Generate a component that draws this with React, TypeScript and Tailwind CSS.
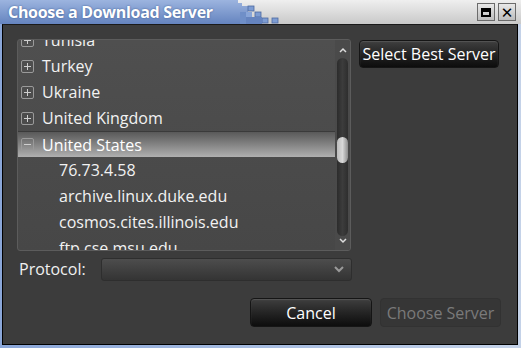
import React from "react";

const font = { fontFamily: '"Open Sans", "DejaVu Sans", sans-serif' };

const Expander = ({ open }: { open?: boolean }) => (
  <svg width="13" height="13" viewBox="0 0 13 13" className="shrink-0">
    <rect x="0.5" y="0.5" width="12" height="12" rx="1.5" fill="none" stroke="#9a9a9a" />
    <line x1="3" y1="6.5" x2="10" y2="6.5" stroke="#cfcfcf" />
    {!open && <line x1="6.5" y1="3" x2="6.5" y2="10" stroke="#cfcfcf" />}
  </svg>
);

const TitleDecor = () => (
  <svg width="60" height="24" viewBox="0 0 60 24" className="absolute left-[232px] top-0">
    <defs>
      <linearGradient id="blu" x1="0" y1="0" x2="0" y2="1">
        <stop offset="0" stopColor="#9cb4df" />
        <stop offset="1" stopColor="#6584bf" />
      </linearGradient>
    </defs>
    <polygon points="0,0 6,0 6,3 10,3 10,6 16,6 16,12 8,12 8,24 0,24" fill="url(#blu)" />
    <rect x="16" y="6" width="6" height="5" fill="#7d9cd2" stroke="#4d6aa0" strokeWidth="0.8" />
    <rect x="23" y="12" width="6" height="5" fill="#7d9cd2" stroke="#4d6aa0" strokeWidth="0.8" />
    <rect x="14" y="12" width="6" height="5" fill="#88a5d8" />
    <rect x="30" y="18" width="6" height="5" fill="#7d9cd2" stroke="#4d6aa0" strokeWidth="0.8" />
    <rect x="40" y="18" width="6" height="5" fill="#7d9cd2" stroke="#4d6aa0" strokeWidth="0.8" />
    <rect x="8" y="12" width="6" height="12" fill="#6f8fc8" />
    <rect x="14" y="17" width="16" height="7" fill="#6584bf" />
  </svg>
);

const rows: { label: string; kind: "group" | "open" | "child" }[] = [
  { label: "Tunisia", kind: "group" },
  { label: "Turkey", kind: "group" },
  { label: "Ukraine", kind: "group" },
  { label: "United Kingdom", kind: "group" },
  { label: "United States", kind: "open" },
  { label: "76.73.4.58", kind: "child" },
  { label: "archive.linux.duke.edu", kind: "child" },
  { label: "cosmos.cites.illinois.edu", kind: "child" },
  { label: "ftp.cse.msu.edu", kind: "child" },
];

export default function App() {
  return (
    <div
      className="w-[521px] h-[348px] bg-[#dcdcdc] flex flex-col overflow-hidden"
      style={font}
    >
      {/* title bar */}
      <div className="relative h-[24px] shrink-0 bg-gradient-to-b from-[#efefef] to-[#c9c9c9] flex items-center">
        <div className="absolute left-0 top-0 h-full w-[234px] bg-gradient-to-b from-[#9cb4df] to-[#6584bf]" />
        <TitleDecor />
        <span className="relative pl-[8px] text-[16px] font-bold text-white tracking-[-0.3px] [text-shadow:0_0_2px_#3b5a90]">
          Choose a Download Server
        </span>
        <div className="ml-auto mr-[5px] relative flex gap-[3px]">
          <div className="w-[18px] h-[18px] border border-[#6b6b6b] bg-gradient-to-b from-[#e8e8e8] to-[#bdbdbd] flex items-center justify-center">
            <div className="w-[10px] h-[9px] border-2 border-black border-t-[4px]" />
          </div>
          <div className="w-[18px] h-[18px] border border-[#6b6b6b] bg-gradient-to-b from-[#e8e8e8] to-[#bdbdbd] flex items-center justify-center text-black text-[15px] font-black leading-none">
            ✕
          </div>
        </div>
      </div>

      {/* frame */}
      <div className="flex-1 flex bg-gradient-to-r from-[#8aa6d8] to-[#c4d2e8] pl-[2px] pr-[3px] pb-[3px]">
        <div className="flex-1 flex flex-col bg-[#3c3c3c] border border-t-[#1a1a1a] border-black">
          <div className="flex gap-[8px] pl-[14px] pr-[15px] pt-[14px]">
            {/* list */}
            <div className="relative w-[334px] h-[212px] rounded-[3px] border border-[#5c5c5c] bg-gradient-to-b from-[#4f4f4f] to-[#474747] flex overflow-hidden">
              <div className="flex-1 overflow-hidden">
                <div className="mt-[-13px]">
                  {rows.map((r) => (
                    <div
                      key={r.label}
                      className={
                        r.kind === "open"
                          ? "h-[26px] flex items-center gap-[8px] pl-[3px] text-[16px] text-white border-t border-[#3a3a3a] bg-gradient-to-b from-[#595959] to-[#b0b0b0]"
                          : r.kind === "child"
                          ? "h-[26px] flex items-center pl-[41px] text-[16px] text-[#f2f2f2]"
                          : "h-[26px] flex items-center gap-[8px] pl-[3px] text-[16px] text-[#f2f2f2]"
                      }
                    >
                      {r.kind !== "child" && <Expander open={r.kind === "open"} />}
                      <span>{r.label}</span>
                    </div>
                  ))}
                </div>
              </div>
              {/* scrollbar */}
              <div className="w-[15px] flex flex-col items-center shrink-0 bg-[#4a4a4a]">
                <svg width="8" height="6" viewBox="0 0 8 6" className="mt-[7px]">
                  <polyline points="1,5 4,2 7,5" fill="none" stroke="#dddddd" strokeWidth="1.5" />
                </svg>
                <div className="mt-[5px] w-[11px] h-[178px] rounded-full bg-gradient-to-r from-[#2c2c2c] via-[#3c3c3c] to-[#2e2e2e] relative">
                  <div className="absolute left-0 top-[79px] w-[11px] h-[26px] rounded-full bg-gradient-to-r from-[#bdbdbd] via-[#d8d8d8] to-[#8c8c8c]" />
                </div>
                <svg width="8" height="6" viewBox="0 0 8 6" className="mt-[2px]">
                  <polyline points="1,1 4,4 7,1" fill="none" stroke="#dddddd" strokeWidth="1.5" />
                </svg>
              </div>
            </div>

            <div className="pt-[1px]">
              <button className="w-[140px] h-[28px] rounded-[4px] border border-[#151515] bg-gradient-to-b from-[#3f3f3f] to-[#0d0d0d] text-white text-[16px] shadow-[0_1px_1px_#555_inset]">
                Select Best Server
              </button>
            </div>
          </div>

          {/* protocol */}
          <div className="flex items-center pl-[16px] mt-[6px]">
            <span className="w-[82px] text-[16px] text-[#f0f0f0]">Protocol:</span>
            <div className="w-[251px] h-[23px] rounded-[3px] bg-gradient-to-b from-[#4d4d4d] to-[#343434] border border-[#2e2e2e] flex items-center justify-end pr-[7px]">
              <svg width="10" height="7" viewBox="0 0 10 7">
                <polyline points="1,1 5,5 9,1" fill="none" stroke="#9a9a9a" strokeWidth="2" />
              </svg>
            </div>
          </div>

          {/* buttons */}
          <div className="flex justify-end gap-[8px] pr-[16px] mt-[17px]">
            <button className="w-[122px] h-[29px] rounded-[4px] border border-[#151515] bg-gradient-to-b from-[#3f3f3f] to-[#0d0d0d] text-white text-[16px] shadow-[0_1px_1px_#555_inset]">
              Cancel
            </button>
            <button className="w-[121px] h-[29px] rounded-[4px] border border-[#323232] bg-[#363636] text-[#7a7a7a] text-[16px]">
              Choose Server
            </button>
          </div>
        </div>
      </div>
    </div>
  );
}
